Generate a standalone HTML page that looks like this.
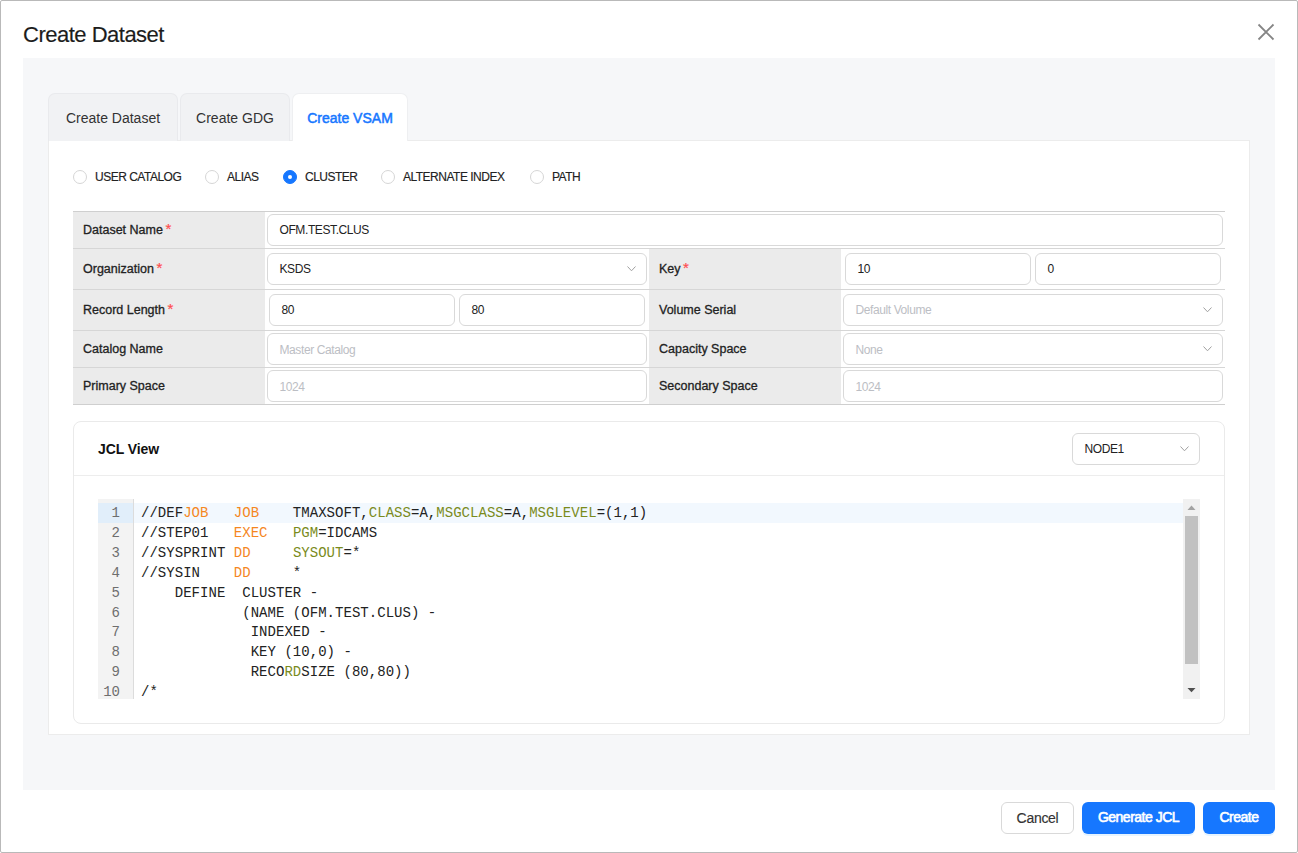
<!DOCTYPE html>
<html>
<head>
<meta charset="utf-8">
<style>
*{box-sizing:border-box;margin:0;padding:0}
html,body{width:1298px;height:853px;overflow:hidden;background:#fff}
body{font-family:"Liberation Sans",sans-serif;color:#222;position:relative}
.a{position:absolute}
#frame{left:0;top:0;width:1298px;height:853px;border:1px solid #b9b9b9;border-radius:2px}
#title{left:23px;top:22px;font-size:22px;color:#1c1c1c;line-height:26px;letter-spacing:-0.5px;-webkit-text-stroke:0.15px #1c1c1c}
#close{left:1257px;top:23px;width:18px;height:18px}
#gray{left:23px;top:58px;width:1252px;height:732px;background:#f6f7f9}
.tab{top:93px;height:48px;background:#f1f2f4;border:1px solid #e9eaed;border-bottom:none;border-radius:7px 7px 0 0;font-size:14px;color:#333;line-height:20px;padding-top:14px;text-align:center}
.tab.on{background:#fff;color:#1677ff;border-color:#eeeff1}
#panel{left:48px;top:140px;width:1202px;height:595px;background:#fff;border:1px solid #ececec}
.radio{top:170px;width:14px;height:14px;border:1px solid #d6d6d6;border-radius:50%;background:#fff}
.radio.on{background:#1677ff;border-color:#1677ff}
.radio.on::after{content:"";position:absolute;left:4px;top:4px;width:4px;height:4px;border-radius:50%;background:#fff}
.rl{top:169px;font-size:12px;line-height:16px;letter-spacing:-0.5px;color:#222;-webkit-text-stroke:0.15px #222}
.hl{height:1px;background:#d6d6d6}
.lab{background:#ebebeb}
.lt{font-size:12.5px;line-height:16px;font-weight:400;color:#222;-webkit-text-stroke:0.3px #222}
.lt b{color:#ff4d4f;font-weight:400;margin-left:2.5px;font-size:15px;position:relative;top:0px;-webkit-text-stroke:0.2px #ff4d4f}
.inp{border:1px solid #d9d9d9;border-radius:6px;background:#fff;font-size:12px;line-height:16px;letter-spacing:-0.4px;color:#222;padding-left:11.5px}
.ph{color:#bcbec4}
.chev{position:absolute;width:9px;height:6px}
#card{left:73px;top:421px;width:1152px;height:303px;border:1px solid #eaeaea;border-radius:8px;background:#fff}
#cardhdr{left:74px;top:475px;width:1150px;height:1px;background:#ededed}
#jclt{left:98px;top:440px;font-size:14px;font-weight:700;color:#111;line-height:18px;letter-spacing:-0.1px}
#node{left:1072px;top:433px;width:128px;height:32px}
#gutter{left:98px;top:499px;width:36px;height:200px;background:#f3f3f3;border-right:1px solid #dcdcdc}
#code{left:133px;top:499px;width:1050px;height:200px;overflow:hidden}
.ln{position:absolute;left:98px;width:22px;text-align:right;font-family:"Liberation Mono",monospace;font-size:14px;line-height:19.9px;color:#6e6e6e}
.cl{position:absolute;left:141px;font-family:"Liberation Mono",monospace;font-size:14px;line-height:19.9px;color:#222;white-space:pre;letter-spacing:0.035px}
.k{color:#f5871f}
.g{color:#7a8b1c}
#sb{left:1183px;top:499px;width:17px;height:200px;background:#f1f1f1}
#thumb{left:1185px;top:516px;width:13px;height:148px;background:#c1c1c1}
.btn{top:802px;height:32px;border-radius:6px;font-size:14px;line-height:20px;text-align:center;padding-top:4.5px}
.btn.p{background:#1677ff;color:#fff;font-weight:400;-webkit-text-stroke:0.6px #fff;letter-spacing:-0.5px;box-shadow:0 2px 0 rgba(5,145,255,0.1)}
.btn.c{background:#fff;border:1px solid #d9d9d9;color:#333;padding-top:4.5px;letter-spacing:-0.3px;-webkit-text-stroke:0.15px #333}
</style>
</head>
<body>
<div class="a" id="frame"></div>
<div class="a" id="title">Create Dataset</div>
<svg class="a" id="close" viewBox="0 0 18 18"><path d="M1.5 1.5L16.5 16.5M16.5 1.5L1.5 16.5" stroke="#858585" stroke-width="1.8" fill="none"/></svg>

<div class="a" id="gray"></div>
<div class="a" id="panel"></div>
<div class="a tab" style="left:48px;width:130px">Create Dataset</div>
<div class="a tab" style="left:180px;width:110px">Create GDG</div>
<div class="a tab on" style="left:292px;width:116px;-webkit-text-stroke:0.5px #1677ff">Create VSAM</div>


<!-- radios -->
<div class="a radio" style="left:73px"></div><div class="a rl" style="left:95px">USER CATALOG</div>
<div class="a radio" style="left:205px"></div><div class="a rl" style="left:227px">ALIAS</div>
<div class="a radio on" style="left:283px"></div><div class="a rl" style="left:305px">CLUSTER</div>
<div class="a radio" style="left:381px"></div><div class="a rl" style="left:403px">ALTERNATE INDEX</div>
<div class="a radio" style="left:530px"></div><div class="a rl" style="left:552px">PATH</div>

<!-- table -->
<div class="a lab" style="left:73px;top:211px;width:192px;height:193px"></div>
<div class="a lab" style="left:649px;top:248px;width:192px;height:156px"></div>
<div class="a hl" style="left:73px;top:211px;width:1152px;background:#cfcfcf"></div>
<div class="a hl" style="left:73px;top:248px;width:1152px"></div>
<div class="a hl" style="left:73px;top:289px;width:1152px"></div>
<div class="a hl" style="left:73px;top:330px;width:1152px"></div>
<div class="a hl" style="left:73px;top:367px;width:1152px"></div>
<div class="a hl" style="left:73px;top:404px;width:1152px;background:#cfcfcf"></div>

<div class="a lt" style="left:83px;top:221px">Dataset Name<b>*</b></div>
<div class="a lt" style="left:83px;top:260px">Organization<b>*</b></div>
<div class="a lt" style="left:83px;top:301px">Record Length<b>*</b></div>
<div class="a lt" style="left:83px;top:341px">Catalog Name</div>
<div class="a lt" style="left:83px;top:378px">Primary Space</div>
<div class="a lt" style="left:659px;top:260px">Key<b>*</b></div>
<div class="a lt" style="left:659px;top:302px">Volume Serial</div>
<div class="a lt" style="left:659px;top:341px">Capacity Space</div>
<div class="a lt" style="left:659px;top:378px">Secondary Space</div>

<div class="a inp" style="left:267px;top:214px;width:956px;height:32px;padding-top:7px">OFM.TEST.CLUS</div>
<div class="a inp" style="left:267px;top:253px;width:380px;height:32px;padding-top:7px">KSDS<svg class="chev" style="left:359px;top:12px" viewBox="0 0 9 6"><path d="M0.5 0.5L4.5 4.8L8.5 0.5" stroke="#a0a0a0" stroke-width="1" fill="none"/></svg></div>
<div class="a inp" style="left:845px;top:253px;width:186px;height:32px;padding-top:7px">10</div>
<div class="a inp" style="left:1035px;top:253px;width:186px;height:32px;padding-top:7px">0</div>
<div class="a inp" style="left:269px;top:294px;width:186px;height:32px;padding-top:7px">80</div>
<div class="a inp" style="left:459px;top:294px;width:186px;height:32px;padding-top:7px">80</div>
<div class="a inp ph" style="left:843px;top:294px;width:380px;height:32px;padding-top:7px">Default Volume<svg class="chev" style="left:359px;top:12px" viewBox="0 0 9 6"><path d="M0.5 0.5L4.5 4.8L8.5 0.5" stroke="#a0a0a0" stroke-width="1" fill="none"/></svg></div>
<div class="a inp ph" style="left:267px;top:333px;width:380px;height:32px;padding-top:8px">Master Catalog</div>
<div class="a inp ph" style="left:843px;top:333px;width:380px;height:32px;padding-top:8px">None<svg class="chev" style="left:359px;top:12px" viewBox="0 0 9 6"><path d="M0.5 0.5L4.5 4.8L8.5 0.5" stroke="#a0a0a0" stroke-width="1" fill="none"/></svg></div>
<div class="a inp ph" style="left:267px;top:370px;width:380px;height:32px;padding-top:8px">1024</div>
<div class="a inp ph" style="left:843px;top:370px;width:380px;height:32px;padding-top:8px">1024</div>

<!-- card -->
<div class="a" id="card"></div>
<div class="a" id="cardhdr"></div>
<div class="a" id="jclt">JCL View</div>
<div class="a inp" id="node" style="padding-top:7px">NODE1<svg class="chev" style="left:107px;top:12px" viewBox="0 0 9 6"><path d="M0.5 0.5L4.5 4.8L8.5 0.5" stroke="#a0a0a0" stroke-width="1" fill="none"/></svg></div>

<div class="a" id="gutter"></div>
<div class="a" style="left:98px;top:503px;width:35px;height:20px;background:#e1eefa"></div>
<div class="a" style="left:134px;top:503px;width:1049px;height:20px;background:#f2f8fe"></div>
<div class="ln" style="top:504.0px">1</div>
<div class="ln" style="top:523.9px">2</div>
<div class="ln" style="top:543.8px">3</div>
<div class="ln" style="top:563.7px">4</div>
<div class="ln" style="top:583.6px">5</div>
<div class="ln" style="top:603.5px">6</div>
<div class="ln" style="top:623.4px">7</div>
<div class="ln" style="top:643.3px">8</div>
<div class="ln" style="top:663.2px">9</div>
<div class="ln" style="top:683.1px;height:16px;overflow:hidden">10</div>

<div class="cl" style="top:504.0px">//DEF<span class="k">JOB</span>   <span class="k">JOB</span>    TMAXSOFT,<span class="g">CLASS</span>=A,<span class="g">MSGCLASS</span>=A,<span class="g">MSGLEVEL</span>=(1,1)</div>
<div class="cl" style="top:523.9px">//STEP01   <span class="k">EXEC</span>   <span class="g">PGM</span>=IDCAMS</div>
<div class="cl" style="top:543.8px">//SYSPRINT <span class="k">DD</span>     <span class="g">SYSOUT</span>=*</div>
<div class="cl" style="top:563.7px">//SYSIN    <span class="k">DD</span>     *</div>
<div class="cl" style="top:583.6px">    DEFINE  CLUSTER -</div>
<div class="cl" style="top:603.5px">            (NAME (OFM.TEST.CLUS) -</div>
<div class="cl" style="top:623.4px">             INDEXED -</div>
<div class="cl" style="top:643.3px">             KEY (10,0) -</div>
<div class="cl" style="top:663.2px">             RECO<span class="g">RD</span>SIZE (80,80))</div>
<div class="cl" style="top:683.1px;height:16px;overflow:hidden">/*</div>

<div class="a" id="sb"></div>
<div class="a" id="thumb"></div>
<svg class="a" style="left:1187px;top:504px" width="9" height="7" viewBox="0 0 9 7"><path d="M0.5 6L4.5 1.6L8.5 6Z" fill="#a3a3a3"/></svg>
<svg class="a" style="left:1187px;top:687px" width="9" height="6" viewBox="0 0 9 6"><path d="M0.5 1L4.5 5.2L8.5 1Z" fill="#505050"/></svg>

<!-- buttons -->
<div class="a btn c" style="left:1001px;width:73px">Cancel</div>
<div class="a btn p" style="left:1082px;width:113px">Generate JCL</div>
<div class="a btn p" style="left:1203px;width:72px">Create</div>
</body>
</html>
